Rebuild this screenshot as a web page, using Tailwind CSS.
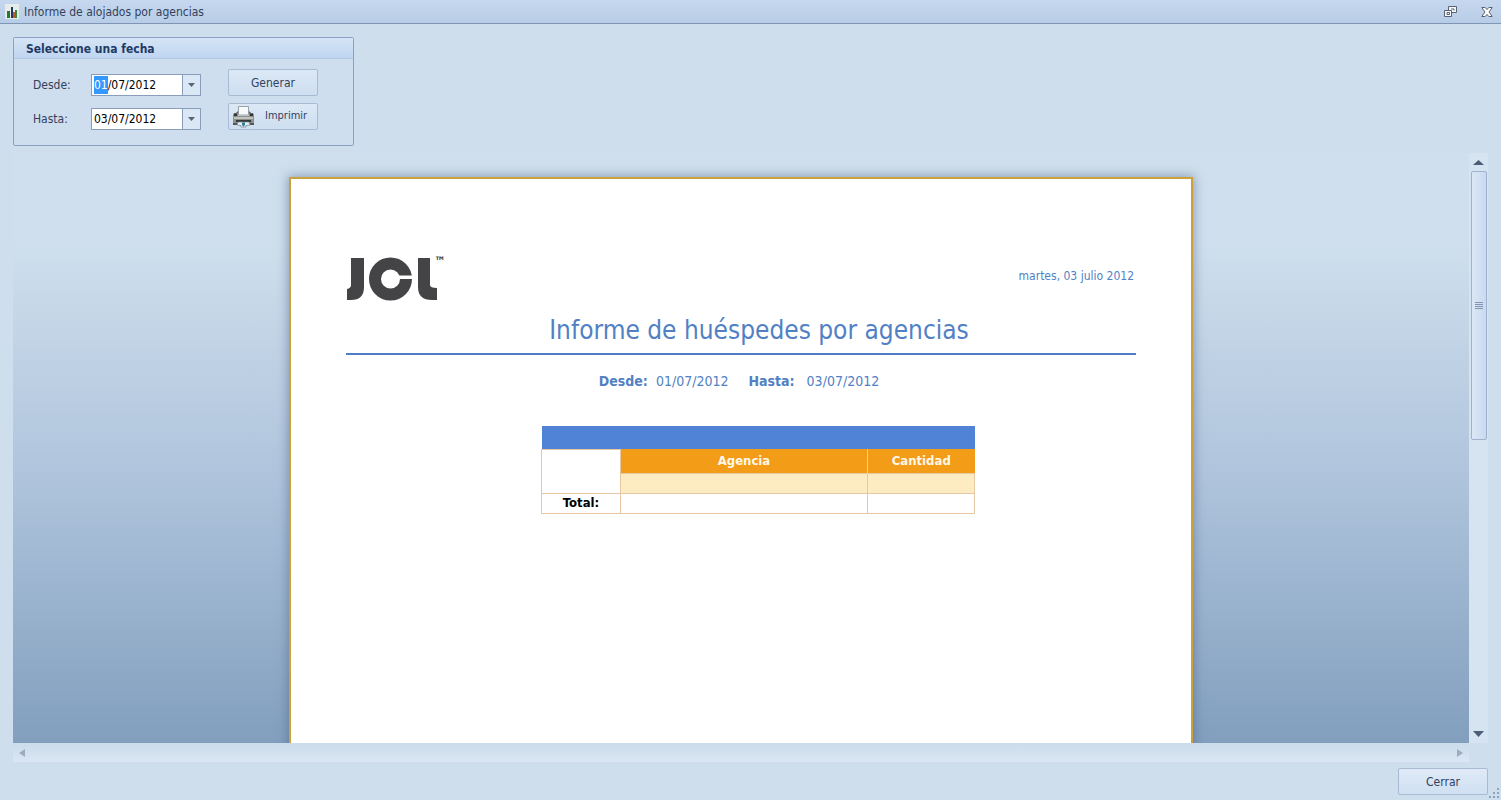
<!DOCTYPE html>
<html lang="es">
<head>
<meta charset="utf-8">
<title>Informe de alojados por agencias</title>
<script src="https://cdn.jsdelivr.net/npm/@tailwindcss/browser@4"></script>
</head>
<body class="flex h-screen flex-col overflow-hidden bg-[#cfdeed] font-['DejaVu_Sans_Condensed','DejaVu_Sans',sans-serif] text-[12px] text-[#33415c]">
  <header class="flex h-6 shrink-0 items-center gap-1 border-b border-[#8094b4] bg-linear-to-b from-[#c6d8ee] to-[#b7cce6] pl-1 pr-2">
    <svg class="size-4" viewBox="0 0 16 16" aria-hidden="true">
      <path d="M1 0h14v15H1z" fill="#e6ede9"/>
      <path d="M3 7h3v7H3z" fill="#26773a"/><path d="M7 3h2v11H7z" fill="#23395b"/><path d="M9 8h2v6H9z" fill="#c05a28"/><path d="M11 6h2v8h-2z" fill="#2f8a45"/>
    </svg>
    <h1 class="grow pt-px">Informe de alojados por agencias</h1>
    <button type="button" aria-label="Restaurar" class="mr-5">
      <svg class="size-[14px]" viewBox="0 0 14 14" fill="#f5f8fc" stroke="#5a6270"><path d="M5.500 1.500h8v6h-8z"/><path d="M8 4h3v1.500" fill="none"/><path d="M1.500 5.500h7v6h-7z"/><path d="M4 7.500h2.500v2H4z" fill="none"/></svg>
    </button>
    <button type="button" aria-label="Cerrar ventana">
      <svg class="h-[14px] w-3" viewBox="0 0 12 14" fill="#fff" stroke="#5a6270"><path d="M.8 2.500h3.400L6 4.600l1.800-2.100h3.400L8 7l3.200 4.500H7.800L6 9.400l-1.800 2.100H.8L4 7z"/></svg>
    </button>
  </header>

  <main class="flex min-h-0 grow flex-col px-[13px] pt-[13px]">
    <section aria-labelledby="fecha" class="w-[341px] shrink-0 rounded-xs border border-[#8ba0c4] bg-[#cfdeee] pb-[15px]">
      <h2 id="fecha" class="h-[21px] border-b border-[#b4c9e4] bg-linear-to-b from-[#d6e5f6] to-[#bfd5f0] pl-3 leading-[22px] font-bold text-[#1f3a63]">Seleccione una fecha</h2>
      <form class="grid grid-cols-[58px_110px_90px] items-center gap-y-[7px] pl-[19px] pt-[10px]">
        <label for="desde" class="pt-1">Desde:</label>
        <div class="mt-1 flex h-[22px] border border-[#8a9dba] bg-white">
          <input id="desde" type="text" value="01/07/2012" class="w-0 grow pl-[2px] text-black caret-transparent outline-none selection:bg-[#3399ff] selection:text-white">
          <button type="button" aria-label="Abrir calendario desde" class="flex w-[18px] items-center justify-center border-l border-[#8a9dba] bg-[#dae7f5]"><svg class="h-1 w-[7px]" viewBox="0 0 7 4" fill="#56637c"><path d="M0 0h7L3.500 4z"/></svg></button>
        </div>
        <button type="button" class="ml-[27px] h-[27px] w-[90px] rounded-xs border border-[#a9bbd3] bg-linear-to-b from-[#dce8f5] to-[#cedff1]">Generar</button>
        <label for="hasta" class="pt-1">Hasta:</label>
        <div class="mt-1 flex h-[22px] border border-[#8a9dba] bg-white">
          <input id="hasta" type="text" value="03/07/2012" class="w-0 grow pl-[2px] text-black outline-none">
          <button type="button" aria-label="Abrir calendario hasta" class="flex w-[18px] items-center justify-center border-l border-[#8a9dba] bg-[#dae7f5]"><svg class="h-1 w-[7px]" viewBox="0 0 7 4" fill="#56637c"><path d="M0 0h7L3.500 4z"/></svg></button>
        </div>
        <button type="button" class="ml-[27px] flex h-[27px] w-[90px] items-center gap-[10px] rounded-xs border border-[#a9bbd3] bg-linear-to-b from-[#dce8f5] to-[#cedff1] pl-[3px] text-[11px]">
          <svg class="size-[23px] shrink-0" viewBox="0 0 23 23" aria-hidden="true">
            <path d="M3 9l3-3h11l3 3z" fill="#555"/>
            <path d="M6.500 1.500h10V10h-10z" fill="#f7f9fb" stroke="#9aa0a8"/>
            <path d="M1 10q0-2 2-2h3v3h11V8h3q2 0 2 2v9H1z" fill="#8d8f8c"/>
            <path d="M2 8.500h3V11H2zM18 8.500h3V11h-3z" fill="#333"/>
            <path d="M2 12h19v2H2z" fill="#c3c4bd"/>
            <path d="M4 15h15v2H4z" fill="#35373a"/>
            <path d="M1 18h4v2H1zM18 18h4v2h-4z" fill="#555"/>
            <path d="M6 17h11l1 3-4 .5V22H9v-1.500L5 20z" fill="#e9f2f7" stroke="#6f8088" stroke-width=".7"/>
            <path d="M10 17.500h3V20l-1.500 1.500L10 20z" fill="#2b7f95"/>
          </svg>
          <span>Imprimir</span>
        </button>
      </form>
    </section>

    <section aria-label="Vista previa" class="mt-[7px] grid min-h-0 grow grid-cols-[1fr_19px] grid-rows-[minmax(0,1fr)_19px]">
      <div class="overflow-hidden bg-linear-to-b from-[#cfdfed] from-15% via-[#afc4dc] via-55% to-[#829fbe] px-4 pt-6">
        <article class="mx-auto h-[1200px] max-w-[904px] border-2 border-[#c9a23c] bg-white px-[55px] pt-[73px] text-[#5181c4] shadow-[0_0_10px_1px_rgba(70,90,125,0.5)]">
          <div class="flex items-start justify-between">
            <svg class="h-[50px] w-[106px]" viewBox="0 -5 106 50" role="img" aria-label="JCL">
              <g fill="#444446">
                <path d="M5 1h13v29q0 13-13 13H1V32q4-1 4-4z"/>
                <circle cx="44.500" cy="22" r="15.500" fill="none" stroke="#444446" stroke-width="12"/>
                <path d="M50 18.500h17v3.500H50z" fill="#fff"/>
                <path d="M72 1h12v27q0 3 7 3v12h-5q-14 0-14-13z"/>
                <text x="88" y="9" font-size="13" font-weight="bold">™</text>
              </g>
            </svg>
            <time datetime="2012-07-03" class="mt-4 pr-[2px] leading-4">martes, 03 julio 2012</time>
          </div>
          <h2 class="mt-3 border-b-2 border-[#4f7bc9] pb-[7px] pl-9 text-center text-[26px] leading-8">Informe de huéspedes por agencias</h2>
          <p class="mt-4 flex justify-center pr-1 text-[14px] leading-5"><b class="mr-2">Desde:</b><span class="mr-5">01/07/2012</span><b class="mr-3">Hasta:</b><span>03/07/2012</span></p>
          <table class="mt-[35px] ml-[195px] w-[433px] table-fixed border-collapse text-[13px] leading-4">
            <colgroup><col class="w-[79px]"><col class="w-[247px]"><col class="w-[107px]"></colgroup>
            <tbody>
              <tr class="h-[23px] bg-[#5083d6]"><td colspan="3"></td></tr>
              <tr class="h-6 text-[#fff8e8]"><td rowspan="2" class="border border-[#e6c8a4] bg-white"></td><th scope="col" class="border-r border-[#f8cf90] bg-[#f39c17] p-0">Agencia</th><th scope="col" class="bg-[#f39c17] p-0">Cantidad</th></tr>
              <tr class="h-[20px]"><td class="border border-[#e6c8a4] bg-[#fdecc2]"></td><td class="border border-[#e6c8a4] bg-[#fdecc2]"></td></tr>
              <tr class="h-[20px]"><th scope="row" class="border border-[#e6c8a4] p-0 text-black">Total:</th><td class="border border-[#e6c8a4]"></td><td class="border border-[#e6c8a4]"></td></tr>
            </tbody>
          </table>
        </article>
      </div>
      <div role="scrollbar" aria-orientation="vertical" aria-label="Desplazamiento vertical" aria-valuenow="0" class="flex flex-col items-center bg-[#d6e4f1] pt-[7px] pb-[6px]">
        <svg class="h-[5px] w-[11px]" viewBox="0 0 11 5" fill="#4d5d75"><path d="M0 5h11L5.500 0z"/></svg>
        <div class="mt-[6px] flex h-[269px] w-4 flex-col items-center justify-center gap-px rounded-xs border border-[#9fb1cd] bg-linear-to-r from-[#dbe7f6] to-[#c9daef]">
          <i class="h-px w-2 bg-[#8294b3]"></i><i class="h-px w-2 bg-[#8294b3]"></i><i class="h-px w-2 bg-[#8294b3]"></i><i class="h-px w-2 bg-[#8294b3]"></i>
        </div>
        <svg class="mt-auto h-[6px] w-[11px]" viewBox="0 0 11 6" fill="#4d5d75"><path d="M0 0h11L5.500 6z"/></svg>
      </div>
      <div role="scrollbar" aria-orientation="horizontal" aria-label="Desplazamiento horizontal" aria-valuenow="0" class="flex items-center justify-between bg-linear-to-b from-[#cbdcea] to-[#dae6f3] px-[6px]">
        <svg class="h-2 w-[6px]" viewBox="0 0 6 8" fill="#9eacbe"><path d="M6 0v8L0 4z"/></svg>
        <svg class="h-2 w-[6px]" viewBox="0 0 6 8" fill="#9eacbe"><path d="M0 0v8l6-4z"/></svg>
      </div>
    </section>
  </main>

  <footer class="flex h-[38px] shrink-0 items-end justify-end">
    <button type="button" class="mb-[5px] h-[27px] w-[90px] rounded-xs border border-[#a9bbd3] bg-linear-to-b from-[#dfeaf6] to-[#cfe0f2]">Cerrar</button>
    <svg class="size-[13px]" viewBox="0 0 13 13" fill="#8fa3c0" aria-hidden="true"><path d="M9 1h2v2H9zM5 5h2v2H5zM9 5h2v2H9zM1 9h2v2H1zM5 9h2v2H5zM9 9h2v2H9z"/></svg>
  </footer>
  <script>
    const desde = document.getElementById('desde');
    desde.focus();
    desde.setSelectionRange(0, 2);
  </script>
</body>
</html>
